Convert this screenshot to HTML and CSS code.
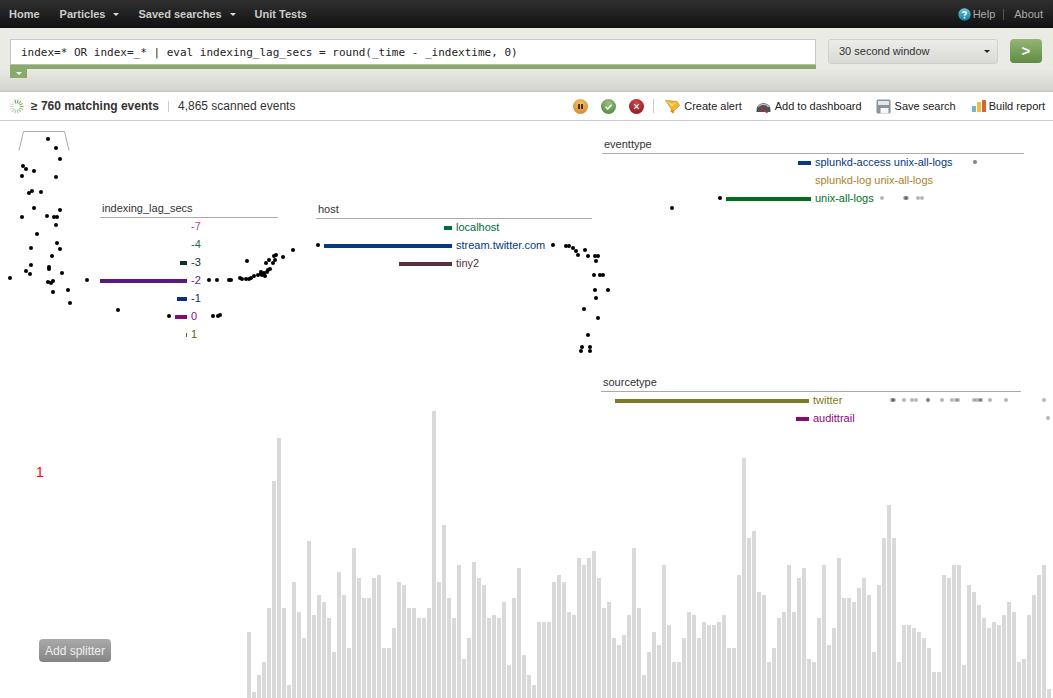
FILE: index.html
```html
<!DOCTYPE html>
<html lang="en">
<head>
  <meta charset="UTF-8">
  <title>Particles</title>
  <link rel="stylesheet" href="styles.css">
</head>
<body>
<nav class="topnav">
  <ul class="nav-left">
    <li><a>Home</a></li>
    <li><a>Particles</a><i class="caret"></i></li>
    <li><a>Saved searches</a><i class="caret"></i></li>
    <li><a>Unit Tests</a></li>
  </ul>
  <div class="nav-right">
    <svg class="help-icon" width="13" height="13" viewBox="0 0 13 13">
      <defs>
        <linearGradient id="helpBlue" x1="0" y1="0" x2="0" y2="1">
          <stop offset="0" stop-color="#6cc4d8"/>
          <stop offset="1" stop-color="#0f7d9e"/>
        </linearGradient>
      </defs>
      <circle cx="6.5" cy="6.5" r="6.2" fill="url(#helpBlue)"/>
      <path d="M4.6 5 C4.7 3.4 8.4 3.3 8.4 5.1 C8.4 6.4 6.5 6.3 6.5 7.8" fill="none" stroke="#fff" stroke-width="1.5"/>
      <rect x="5.7" y="8.8" width="1.6" height="1.6" fill="#fff"/>
    </svg>
    <a>Help</a>
    <span class="nav-sep"></span>
    <a>About</a>
  </div>
</nav>

<section class="searchbar">
  <div class="search-col">
    <div class="search-input">index=* OR index=_* | eval indexing_lag_secs = round(_time - _indextime, 0)</div>
    <div class="search-progress"></div>
    <div class="search-tab"><i class="caret caret-white"></i></div>
  </div>
  <div class="timerange">
    <span>30 second window</span>
    <i class="caret caret-dark"></i>
  </div>
  <button class="go-btn">&gt;</button>
</section>

<section class="statusbar">
  <div class="status-left">
    <svg id="spinner" width="15" height="15" viewBox="-8 -8 16 16"></svg>
    <b>&ge; 760 matching events</b>
    <span class="status-sep"></span>
    <span>4,865 scanned events</span>
  </div>
  <div class="status-right">
    <svg class="round-icon" width="15" height="15" viewBox="0 0 15 15">
      <defs>
        <radialGradient id="gOrange" cx="50%" cy="30%" r="75%">
          <stop offset="0" stop-color="#f4c063"/>
          <stop offset="1" stop-color="#d8852a"/>
        </radialGradient>
        <radialGradient id="gGreen" cx="50%" cy="30%" r="75%">
          <stop offset="0" stop-color="#9cc080"/>
          <stop offset="1" stop-color="#4f8a3c"/>
        </radialGradient>
        <radialGradient id="gRed" cx="50%" cy="30%" r="75%">
          <stop offset="0" stop-color="#d0484a"/>
          <stop offset="1" stop-color="#96141c"/>
        </radialGradient>
      </defs>
      <circle cx="7.5" cy="7.5" r="7.5" fill="url(#gOrange)"/>
      <rect x="5" y="5" width="2" height="5" fill="#4a3010"/>
      <rect x="8" y="5" width="2" height="5" fill="#4a3010"/>
    </svg>
    <svg class="round-icon" width="15" height="15" viewBox="0 0 15 15">
      <circle cx="7.5" cy="7.5" r="7.5" fill="url(#gGreen)"/>
      <path d="M4.6 7.8 L6.6 9.8 L10.6 5.8" fill="none" stroke="#fff" stroke-width="1.6"/>
    </svg>
    <svg class="round-icon" width="15" height="15" viewBox="0 0 15 15">
      <circle cx="7.5" cy="7.5" r="7.5" fill="url(#gRed)"/>
      <path d="M5.2 5.2 L9.8 9.8 M9.8 5.2 L5.2 9.8" fill="none" stroke="#fff" stroke-width="1.2"/>
    </svg>
    <span class="status-sep status-sep-right"></span>
    <a class="action action-alert">
      <svg width="15" height="15" viewBox="0 0 15 15">
        <path d="M0.5 1.5 L12 2.5 L14.5 6.5 L8 12.5 L4.5 7 Z" fill="#f2b632" stroke="#c98a1c" stroke-width="0.8"/>
        <path d="M0.5 1.5 L7 5 L12 2.5 L7 7.5 Z" fill="#fbdc7c"/>
        <path d="M5 12 L8 14.5 L9.5 13 L7 10.5 Z" fill="#e08a20"/>
      </svg>
      Create alert
    </a>
    <a class="action action-dash">
      <svg width="15" height="15" viewBox="0 0 15 15">
        <path d="M0.5 11 C0.5 2 14.5 2 14.5 11 L14.5 13 L0.5 13 Z" fill="#4c5058"/>
        <path d="M2.5 8 C4 4.5 11 4.5 12.5 8" fill="none" stroke="#b8bcc4" stroke-width="1.4"/>
        <path d="M3 7.5 L11.5 14" stroke="#cc2b2b" stroke-width="1.3"/>
      </svg>
      Add to dashboard
    </a>
    <a class="action action-save">
      <svg width="15" height="15" viewBox="0 0 15 15">
        <rect x="0.5" y="0.5" width="14" height="14" rx="1.5" fill="#8a929c"/>
        <rect x="2" y="2" width="11" height="4" fill="#e4e7ea"/>
        <rect x="4.5" y="9" width="8" height="5.5" fill="#f4f5f6"/>
      </svg>
      Save search
    </a>
    <a class="action action-report">
      <svg width="15" height="15" viewBox="0 0 15 15">
        <rect x="0" y="7" width="4" height="6" fill="#74b6c6"/>
        <rect x="5" y="3" width="4" height="10" fill="#edc03a"/>
        <rect x="10" y="1" width="4" height="12" fill="#d8623c"/>
      </svg>
      Build report
    </a>
  </div>
</section>

<main class="canvas">
  <svg class="bracket" width="80" height="40" viewBox="0 0 80 40">
    <polyline points="19,29.5 23.5,10.5 64.5,10.5 69,29.5" fill="none" stroke="#aaa"/>
  </svg>

  <div class="axis axis-lag">
    <div class="axis-title">indexing_lag_secs</div>
    <div class="axis-row c-pink"><span class="slot"></span><span>-7</span></div>
    <div class="axis-row c-teal"><span class="slot"></span><span>-4</span></div>
    <div class="axis-row c-dark"><span class="slot"><i style="width:7px"></i></span><span>-3</span></div>
    <div class="axis-row c-purple"><span class="slot"><i style="width:87px"></i></span><span>-2</span></div>
    <div class="axis-row c-navy"><span class="slot"><i style="width:10px"></i></span><span>-1</span></div>
    <div class="axis-row c-magenta"><span class="slot"><i style="width:12px"></i></span><span>0</span></div>
    <div class="axis-row c-moss"><span class="slot"><i style="width:1px"></i></span><span>1</span></div>
  </div>

  <div class="axis axis-host">
    <div class="axis-title">host</div>
    <div class="axis-row c-green"><span class="slot"><i style="width:8px"></i></span><span>localhost</span></div>
    <div class="axis-row c-blue"><span class="slot"><i style="width:128px"></i></span><span>stream.twitter.com</span></div>
    <div class="axis-row c-plum"><span class="slot"><i style="width:53px"></i></span><span>tiny2</span></div>
  </div>

  <div class="axis axis-eventtype">
    <div class="axis-title">eventtype</div>
    <div class="axis-row c-blue"><span class="slot"><i style="width:13px"></i></span><span>splunkd-access unix-all-logs</span></div>
    <div class="axis-row c-gold"><span class="slot"></span><span>splunkd-log unix-all-logs</span></div>
    <div class="axis-row c-leaf"><span class="slot"><i style="width:85px"></i></span><span>unix-all-logs</span></div>
  </div>

  <div class="axis axis-sourcetype">
    <div class="axis-title">sourcetype</div>
    <div class="axis-row c-olive"><span class="slot"><i style="width:194px"></i></span><span>twitter</span></div>
    <div class="axis-row c-magenta"><span class="slot"><i style="width:13px"></i></span><span>audittrail</span></div>
  </div>

  <svg id="particles" class="particles" width="1053" height="577" viewBox="0 121 1053 577"></svg>

  <div class="counter">1</div>
  <button class="splitter-btn">Add splitter</button>
  <div id="histogram" class="histogram"></div>
</main>

<script src="app.js"></script>
</body>
</html>
```

FILE: styles.css
```css
html, body {
  margin: 0;
  padding: 0;
  height: 100%;
  overflow: hidden;
  background: #fff;
  color: #333;
  font-family: "Liberation Sans", Arial, sans-serif;
  font-size: 11px;
}
body {
  display: flex;
  flex-direction: column;
}

/* top nav */
.topnav {
  height: 28px;
  flex: none;
  display: flex;
  justify-content: space-between;
  align-items: center;
  background: linear-gradient(#303030, #111);
  color: #ccc;
  padding: 0 10px 0 9px;
}
.nav-left {
  display: flex;
  list-style: none;
  margin: 0;
  padding: 0;
  gap: 20px;
  font-weight: bold;
}
.nav-left li {
  display: flex;
  align-items: center;
}
.caret {
  display: inline-block;
  width: 0;
  height: 0;
  margin-left: 8px;
  margin-right: -1px;
  border-left: 3px solid transparent;
  border-right: 3px solid transparent;
  border-top: 3px solid #ddd;
}
.nav-right {
  display: flex;
  align-items: center;
  color: #aaa;
}
.help-icon {
  margin-right: 2px;
}
.nav-sep {
  width: 1px;
  height: 11px;
  background: #555;
  margin: 0 10px 0 8px;
}

/* search band */
.searchbar {
  height: 64px;
  flex: none;
  box-sizing: border-box;
  display: flex;
  align-items: flex-start;
  padding: 11px 11px 0 10px;
  background: linear-gradient(#eaebe5 0, #eaebe5 40px, #d3d4ce 63px);
  border-bottom: 1px solid #c8c8c4;
}
.search-col {
  width: 806px;
  flex: none;
}
.search-input {
  height: 26px;
  box-sizing: border-box;
  background: #fff;
  border: 1px solid #c9c9c5;
  border-bottom-color: #bbb;
  padding: 0 10px;
  line-height: 26px;
  font-family: "DejaVu Sans Mono", monospace;
  font-size: 11px;
  color: #222;
  white-space: nowrap;
}
.search-progress {
  height: 4px;
  background: #88ab6c;
}
.search-tab {
  width: 17px;
  height: 9px;
  background: #88ab6c;
  display: flex;
  align-items: center;
  justify-content: center;
}
.caret-white {
  margin: 0;
  border-top-color: #fff;
}
.timerange {
  width: 170px;
  height: 25px;
  box-sizing: border-box;
  margin-left: 12px;
  padding: 0 8px 2px 10px;
  display: flex;
  align-items: center;
  justify-content: space-between;
  background: linear-gradient(#ececea, #d9d9d5);
  border: 1px solid #cfcfcb;
  border-radius: 3px;
  color: #333;
}
.caret-dark {
  border-top-color: #222;
  margin-top: 2px;
}
.go-btn {
  width: 32px;
  height: 24px;
  margin-left: 12px;
  padding: 0 0 2px;
  border: 0;
  border-radius: 4px;
  background: linear-gradient(#94b577, #5f8b42);
  color: #fff;
  font-family: "Liberation Sans", Arial, sans-serif;
  font-size: 15px;
  font-weight: bold;
}

/* status row */
.statusbar {
  height: 29px;
  flex: none;
  box-sizing: border-box;
  display: flex;
  justify-content: space-between;
  align-items: center;
  padding: 0 8px 0 9px;
  border-bottom: 1px solid #ccc;
  color: #333;
}
.status-left {
  display: flex;
  align-items: center;
  font-size: 12px;
}
.status-left b {
  margin-left: 7px;
}
.status-sep {
  width: 1px;
  height: 11px;
  background: #ccc;
  margin: 0 9px;
}
.status-right {
  display: flex;
  align-items: center;
}
.round-icon + .round-icon {
  margin-left: 13px;
}
.status-sep-right {
  height: 14px;
  margin: 0 11px 0 9px;
}
.action {
  display: flex;
  align-items: center;
  gap: 4px;
  color: #222;
}
.action-dash,
.action-save {
  margin-left: 14px;
}
.action-report {
  margin-left: 16px;
  gap: 2px;
}

/* particle canvas */
.canvas {
  position: relative;
  flex: 1;
  overflow: hidden;
}
.bracket {
  position: absolute;
  left: 0;
  top: 0;
}
.axis {
  position: absolute;
}
.axis-title {
  height: 17px;
  line-height: 17px;
  padding-left: 2px;
  border-bottom: 1px solid #aaa;
  color: #333;
}
.axis-row {
  height: 18px;
  display: flex;
  align-items: center;
  gap: 4px;
  white-space: nowrap;
}
.axis-row span:last-child {
  margin-bottom: 2px;
}
.slot {
  display: flex;
  justify-content: flex-end;
}
.slot i {
  display: block;
  height: 4px;
  background: currentColor;
}
.axis-lag { left: 100px; top: 79px; width: 178px; }
.axis-lag .slot { width: 87px; }
.axis-host { left: 316px; top: 80px; width: 276px; }
.axis-host .slot { width: 136px; }
.axis-eventtype { left: 602px; top: 15px; width: 422px; }
.axis-eventtype .slot { width: 209px; }
.axis-sourcetype { left: 601px; top: 253px; width: 420px; }
.axis-sourcetype .slot { width: 208px; }

.c-pink { color: #c63a98; }
.c-teal { color: #1b6e56; }
.c-dark { color: #0e2f2a; }
.c-purple { color: #5c1a78; }
.c-navy { color: #0a2f7c; }
.c-magenta { color: #880a78; }
.c-moss { color: #4f6a08; }
.c-green { color: #006b3c; }
.c-blue { color: #033a80; }
.c-plum { color: #55303f; }
.c-gold { color: #a9822a; }
.c-leaf { color: #00701f; }
.c-olive { color: #7b7a26; }

.particles {
  position: absolute;
  left: 0;
  top: 0;
  z-index: 2;
  pointer-events: none;
}
.counter {
  position: absolute;
  left: 36px;
  top: 343px;
  color: #f00;
  font-size: 14px;
}
.splitter-btn {
  position: absolute;
  left: 39px;
  top: 518px;
  width: 72px;
  height: 23px;
  padding: 0;
  border: 0;
  border-radius: 4px;
  background: linear-gradient(#aaa, #858585);
  color: #eee;
  font-family: "Liberation Sans", Arial, sans-serif;
  font-size: 12px;
}
.histogram {
  position: absolute;
  left: 247px;
  bottom: 0;
  display: flex;
  align-items: flex-end;
  gap: 1px;
}
.histogram span {
  width: 4px;
  background: #d9d9d9;
}
```

FILE: app.js
```js
// histogram heights, one bar per time bucket
const heights = [
  66, 6, 23, 36, 90, 217, 260, 90, 13, 116, 86, 60, 157, 83, 103, 96, 80, 46, 126, 103,
  50, 150, 120, 100, 100, 120, 123, 50, 50, 70, 116, 113, 90, 90, 80, 80, 90, 287, 116, 173,
  100, 80, 133, 39, 60, 136, 120, 113, 80, 83, 80, 96, 33, 100, 130, 43, 23, 13, 76, 76,
  76, 116, 123, 116, 86, 83, 140, 133, 140, 147, 120, 90, 96, 60, 53, 63, 83, 150, 90, 23,
  46, 66, 53, 133, 73, 36, 36, 60, 86, 83, 60, 76, 73, 73, 76, 83, 50, 50, 123, 240,
  160, 167, 106, 103, 36, 50, 80, 86, 133, 86, 120, 130, 39, 36, 80, 133, 53, 70, 140, 100,
  100, 96, 110, 120, 103, 46, 113, 160, 193, 160, 36, 73, 73, 70, 66, 60, 50, 26, 26, 123,
  120, 133, 133, 33, 113, 106, 93, 80, 70, 76, 73, 83, 96, 86, 36, 39, 83, 103, 123, 133, 9
];

const histogram = document.getElementById("histogram");
heights.forEach((h) => {
  const bar = document.createElement("span");
  bar.style.height = h + "px";
  histogram.appendChild(bar);
});

// particles in flight
const dots = [
  [48,139],[56,148],[60,159],[23,166],[26,169],[34,171],[22,176],[56,177],[32,191],[29,193],
  [41,192],[34,208],[60,210],[22,217],[47,216],[54,217],[57,217],[56,225],[37,234],[57,243],
  [31,248],[60,249],[52,256],[31,265],[49,267],[49,269],[26,271],[30,274],[62,273],[10,278],
  [48,282],[51,283],[53,281],[87,280],[68,290],[53,292],[70,303],[118,310],[169,316],[213,316],
  [218,316],[220,315],[209,280],[217,280],[229,280],[231,280],[240,278],[242,279],[246,279],
  [249,279],[251,278],[254,276],[258,275],[261,274],[261,272],[264,273],[262,275],[265,276],
  [268,270],[270,269],[267,272],[266,263],[269,260],[273,263],[275,260],[274,256],[276,255],
  [283,257],[293,250],[247,261],[318,245],[553,245],[566,246],[569,246],[573,248],[576,251],
  [578,255],[585,250],[588,256],[595,256],[598,256],[596,261],[594,275],[600,275],[603,275],
  [595,290],[608,290],[596,298],[584,309],[598,318],[588,335],[582,347],[581,351],[590,347],
  [590,351],[720,198],[672,208]
];
// these have landed behind a label, so they fade
const faded = [
  [975,162],[975,162],[882,198],[905,198],[907,198],[906,198],[918,198],[922,198],[892,400],
  [894,400],[893,400],[904,400],[912,400],[916,400],[928,400],[928,400],[942,400],[952,400],
  [956,400],[958,400],[974,400],[977,400],[980,400],[981,400],[990,400],[1006,400],[1044,400],
  [1048,418]
];

const svgNS = "http://www.w3.org/2000/svg";
const particles = document.getElementById("particles");
function addDot(p, opacity) {
  const c = document.createElementNS(svgNS, "circle");
  c.setAttribute("cx", p[0]);
  c.setAttribute("cy", p[1]);
  c.setAttribute("r", 2);
  c.setAttribute("opacity", opacity);
  particles.appendChild(c);
}
dots.forEach((p) => addDot(p, 1));
faded.forEach((p) => addDot(p, 0.28));

// spinner ticks
const spinner = document.getElementById("spinner");
for (let i = 0; i < 14; i++) {
  const a = (i / 14) * Math.PI * 2;
  const t = document.createElementNS(svgNS, "line");
  t.setAttribute("x1", Math.cos(a) * 3.5);
  t.setAttribute("y1", Math.sin(a) * 3.5);
  t.setAttribute("x2", Math.cos(a) * 7.5);
  t.setAttribute("y2", Math.sin(a) * 7.5);
  t.setAttribute("stroke", "#6aa84f");
  t.setAttribute("stroke-width", 1.2);
  // brightest at the upper right, fading round to the lower left
  const d = ((i + 4) % 14) / 14;
  t.setAttribute("opacity", (1 - d * 0.85).toFixed(2));
  spinner.appendChild(t);
}
```
